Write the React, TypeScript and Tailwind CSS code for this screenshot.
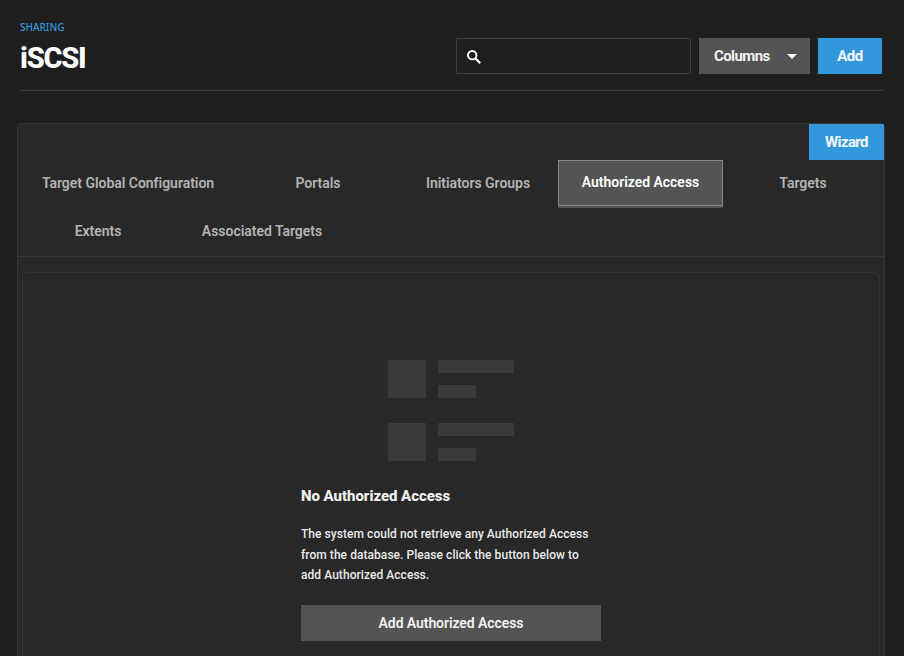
import type { ReactNode } from "react";

function Tab({ label, className }: { label: string; className: string }) {
  return (
    <button className={`flex h-12 items-center justify-center pb-0.5 whitespace-nowrap text-[14px] font-semibold tracking-[-0.03px] text-[#b4b4b4] ${className}`}>
      {label}
    </button>
  );
}

function PrimaryButton({ children, className }: { children: ReactNode; className: string }) {
  return (
    <button className={`flex h-9 items-center justify-center bg-[#3397db] pt-px text-[15px] font-bold text-[#f4fafd] ${className}`}>
      {children}
    </button>
  );
}

function PlaceholderRow() {
  return (
    <div className="flex h-[38px] gap-3">
      <div className="w-[38px] bg-[#3a3a3a]" />
      <div className="flex flex-col justify-between">
        <div className="h-[13px] w-[76px] bg-[#3a3a3a]" />
        <div className="h-[13px] w-[38px] bg-[#3a3a3a]" />
      </div>
    </div>
  );
}

export default function App() {
  return (
    <div className="h-[656px] w-[904px] overflow-hidden bg-[#1e1e1e] font-['Roboto',sans-serif] text-white">
      <header className="ml-5 flex h-[91px] w-[863px] items-start justify-between border-b border-[#3b3b3b]">
        <div className="pt-[21px]">
          <div className="h-3 font-['Noto_Sans',sans-serif] text-[10px] leading-3 font-medium text-[#3397db]">SHARING</div>
          <h1 className="mt-[9px] text-[29px] leading-8 font-extrabold tracking-[-1.2px]">iSCSI</h1>
        </div>
        <div className="mt-[38px] mr-px flex gap-2">
          <div className="flex h-9 w-[235px] items-center border border-[#3b3b3b] pt-px pl-[10px]">
            <svg viewBox="0 0 14 14" className="size-[14px] fill-none stroke-white">
              <circle cx="5.2" cy="5.2" r="4.2" strokeWidth="1.9" />
              <path d="M8 8l5.2 5.2" strokeWidth="2.2" />
            </svg>
          </div>
          <button className="flex h-9 w-[111px] items-center justify-between bg-[#545454] pt-px pr-[13px] pl-[15px] text-[15px] font-bold text-[#f2f2f2]">
            <span className="tracking-[-0.6px]">Columns</span>
            <svg viewBox="0 0 10 5" className="h-[5px] w-[10px] fill-white"><path d="M0 0h10L5 5z" /></svg>
          </button>
          <PrimaryButton className="w-16 tracking-[-0.5px]">Add</PrimaryButton>
        </div>
      </header>

      <main className="mt-8 ml-[17px] h-[560px] w-[868px] rounded-[5px] border border-[#373737] bg-[#282828]">
        <div className="flex justify-end">
          <PrimaryButton className="w-[75px] tracking-[-0.6px]">Wizard</PrimaryButton>
        </div>
        <nav className="h-[97px] border-b border-[#373737]">
          <div className="flex">
            <Tab label="Target Global Configuration" className="w-[220px]" />
            <Tab label="Portals" className="w-40" />
            <Tab label="Initiators Groups" className="w-40" />
            <div className="h-12 w-[165px] border-b-2 border-[#545454]">
              <button className="flex h-[46px] w-full items-center justify-center border border-[#888] bg-[#545454] pb-0.5 text-[14px] font-semibold tracking-[-0.03px] whitespace-nowrap text-white">
                Authorized Access
              </button>
            </div>
            <Tab label="Targets" className="w-40" />
          </div>
          <div className="flex">
            <Tab label="Extents" className="w-40" />
            <Tab label="Associated Targets" className="w-[168px]" />
          </div>
        </nav>
        <section className="mt-[15px] ml-1 h-[410px] w-[858px] rounded-[5px] border border-[#333]">
          <div className="mt-[87px] ml-[365px] flex flex-col gap-[25px]">
            <PlaceholderRow />
            <PlaceholderRow />
          </div>
          <div className="mt-[25px] ml-[278px] w-[300px]">
            <h2 className="h-5 text-[15px] leading-5 font-extrabold tracking-[-0.05px] whitespace-nowrap text-[#f2f2f2]">No Authorized Access</h2>
            <p className="mt-[18px] text-[12px] leading-[20.5px] font-medium tracking-[0.055px] whitespace-nowrap text-[#eaeaea]">
              The system could not retrieve any Authorized Access<br />
              from the database. Please click the button below to<br />
              add Authorized Access.
            </p>
            <button className="mt-[19px] h-9 w-full bg-[#545454] pt-px text-[14px] font-semibold tracking-[-0.08px] text-[#f2f2f2]">Add Authorized Access</button>
          </div>
        </section>
      </main>
    </div>
  );
}
